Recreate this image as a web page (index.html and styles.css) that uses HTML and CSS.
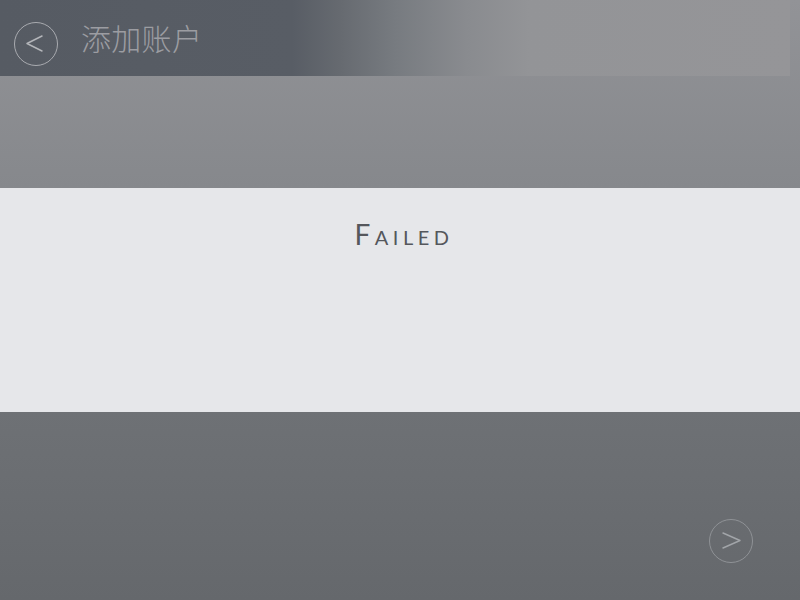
FILE: index.html
```html
<!DOCTYPE html>
<html>
<head>
<meta charset="utf-8">
<link rel="stylesheet" href="styles.css">
</head>
<body>
<div class="page">
  <div class="top">
    <div class="header">
      <div class="back-btn">
        <svg width="44" height="44" viewBox="0 0 44 44"><polyline points="28,14 13,21.5 28,29" fill="none" stroke="#b3b5b9" stroke-width="1.5" stroke-linecap="round" stroke-linejoin="round"/></svg>
      </div>
      <div class="title">添加账户</div>
    </div>
  </div>
  <div class="panel">
    <div class="status">Failed</div>
  </div>
  <div class="bottom">
    <div class="next-btn">
      <svg width="44" height="44" viewBox="0 0 44 44"><polyline points="14,14 31,21.5 14,29" fill="none" stroke="#a2a5a9" stroke-width="1.4" stroke-linecap="round" stroke-linejoin="round"/></svg>
    </div>
  </div>
</div>
</body>
</html>
```
FILE: styles.css
```css
html, body {
  margin: 0;
  padding: 0;
}
body {
  width: 800px;
  height: 600px;
  overflow: hidden;
  font-family: "Noto Sans CJK SC", "DejaVu Sans", sans-serif;
}
.page {
  display: flex;
  flex-direction: column;
  height: 600px;
}
.top {
  height: 188px;
  background: linear-gradient(to bottom, #929397, #86888c);
}
.header {
  width: 790px;
  height: 76px;
  display: flex;
  align-items: center;
  background: linear-gradient(to right, #565b63 0%, #585d65 37%, #666a70 43%, #777b80 50%, #898b8f 59%, #939497 67%, #959598 100%);
}
.back-btn {
  width: 44px;
  height: 44px;
  margin-left: 14px;
  margin-top: 12px;
  border: 1.2px solid #a9abb0;
  border-radius: 50%;
  box-sizing: border-box;
  display: flex;
  align-items: center;
  justify-content: center;
}
.back-btn svg, .next-btn svg {
  display: block;
  flex: none;
}
.title {
  margin-left: 23px;
  margin-top: -2px;
  font-size: 30px;
  font-weight: 300;
  letter-spacing: 0.3px;
  color: #9c9da2;
}
.panel {
  height: 224px;
  background: #e6e7ea;
  display: flex;
  justify-content: center;
}
.status {
  margin-top: 28px;
  margin-left: 8px;
  font-family: "Lato", "DejaVu Sans", sans-serif;
  font-variant: small-caps;
  font-size: 28px;
  letter-spacing: 4.5px;
  color: #55575c;
  height: 36px;
  line-height: 36px;
}
.bottom {
  flex: 1;
  background: linear-gradient(to bottom, #6e7175, #65686c);
  display: flex;
  justify-content: flex-end;
  align-items: flex-start;
}
.next-btn {
  width: 44px;
  height: 44px;
  margin-top: 107px;
  margin-right: 47px;
  border: 1px solid #8f9296;
  border-radius: 50%;
  box-sizing: border-box;
  display: flex;
  align-items: center;
  justify-content: center;
}
```
